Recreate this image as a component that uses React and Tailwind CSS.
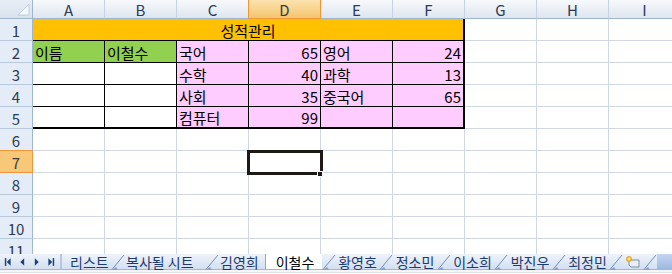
import React from "react";

const COLS = ["A", "B", "C", "D", "E", "F", "G", "H", "I"];
const FONT = { fontFamily: '"Noto Sans CJK KR", "Noto Sans", sans-serif' };

// 표 영역 (A2:F5)
const TABLE = [
  [["이름", "g"], ["이철수", "g"], ["국어", "p"], [65, "p"], ["영어", "p"], [24, "p"]],
  [["", "w"], ["", "w"], ["수학", "p"], [40, "p"], ["과학", "p"], [13, "p"]],
  [["", "w"], ["", "w"], ["사회", "p"], [35, "p"], ["중국어", "p"], [65, "p"]],
  [["", "w"], ["", "w"], ["컴퓨터", "p"], [99, "p"], ["", "p"], ["", "p"]],
];

const FILL = { g: "bg-[#92d050]", p: "bg-[#ffccff]", w: "bg-white" };

const TABS = [
  { name: "리스트", w: "w-[49px]", pl: "pl-[8px]" },
  { name: "복사될 시트", w: "w-[80px]", pl: "pl-[1px]" },
  { name: "김영희", w: "w-[46px]", pl: "pl-[1px]" },
];
const TABS2 = [
  { name: "황영호", w: "w-[43px]" },
  { name: "정소민", w: "w-[44px]" },
  { name: "이소희", w: "w-[43px]" },
  { name: "박진우", w: "w-[44px]" },
  { name: "최정민", w: "w-[43px]" },
];

function Slash() {
  return (
    <svg width="14" height="16" viewBox="0 0 14 16" className="shrink-0">
      <line x1="1" y1="15.5" x2="13" y2="1" stroke="#6f8bb8" strokeWidth="1" />
      <path d="M1 16 L7 16 L5 13 Z" fill="#8aa2c8" />
    </svg>
  );
}

function NavButtons() {
  const c = "#1d3f7c";
  return (
    <div className="flex w-[62px] shrink-0 items-center border-r-2 border-[#b5c8e2]">
      <svg width="62" height="16" viewBox="0 0 62 16">
        <rect x="5" y="4" width="1.5" height="8" fill={c} />
        <path d="M11 4 L7 8 L11 12 Z" fill={c} />
        <path d="M25 4 L21 8 L25 12 Z" fill={c} />
        <path d="M36 4 L40 8 L36 12 Z" fill={c} />
        <path d="M50 4 L54 8 L50 12 Z" fill={c} />
        <rect x="54.5" y="4" width="1.5" height="8" fill={c} />
      </svg>
    </div>
  );
}

function NewSheetIcon() {
  return (
    <svg width="16" height="14" viewBox="0 0 16 14" className="shrink-0">
      <path d="M4 5 H14 V12 H6 L4 10 Z" fill="#e9eef5" stroke="#7f8fa6" strokeWidth="1" />
      <circle cx="4" cy="4" r="2.6" fill="#f7c43a" stroke="#e39a1c" strokeWidth="0.8" />
      <circle cx="4" cy="4" r="1" fill="#fff6c9" />
    </svg>
  );
}

function ColHeader({ c }) {
  const sel = c === "D";
  const beforeSel = c === "C";
  return (
    <div
      className={
        "flex h-[19px] items-center justify-center border-b text-[15px] leading-none " +
        (sel
          ? "border-r border-[#f29536] bg-gradient-to-b from-[#fbe2ae] to-[#f4c66c] text-[#3b3b3b]"
          : "bg-gradient-to-b from-[#f7f9fc] to-[#dfe6ef] text-[#2b3a55] border-b-[#9eb6ce] " +
            (beforeSel ? "border-r border-r-[#f29536]" : "border-r border-r-[#c5d2e2]"))
      }
    >
      {c}
    </div>
  );
}

function RowHeader({ n }) {
  const sel = n === 7;
  const beforeSel = n === 6;
  return (
    <div
      className={
        "flex h-[22px] items-center justify-center border-r border-b pt-px text-[15px] leading-none " +
        (sel
          ? "border-[#f29536] bg-[#f6c877] text-[#3b3b3b]"
          : "bg-[#e4ecf7] text-[#2b3a55] border-r-[#9eb6ce] " +
            (beforeSel ? "border-b-[#f29536]" : "border-b-[#b9c9dc]"))
      }
    >
      {n}
    </div>
  );
}

function Blank({ children, extra = "" }) {
  return <div className={"h-[22px] border-r border-b border-[#d0d7e5] bg-white " + extra}>{children}</div>;
}

export default function App() {
  return (
    <div className="h-[274px] w-[672px] overflow-hidden bg-white" style={FONT}>
      {/* 시트 영역 (11행은 탭 막대에 잘림) */}
      <div className="grid h-[254px] grid-cols-[33px_repeat(9,72px)] content-start overflow-hidden">
        {/* 모서리 */}
        <div className="relative h-[19px] border-r border-b border-[#9eb6ce] bg-gradient-to-b from-[#e8eef6] to-[#d8e2ee]">
          <svg width="32" height="18" viewBox="0 0 32 18" className="absolute inset-0">
            <path d="M29 4 L29 15 L18 15 Z" fill="#f4f7fb" stroke="#b7c6d8" strokeWidth="0.8" />
          </svg>
        </div>
        {COLS.map((c) => (
          <ColHeader key={c} c={c} />
        ))}

        {/* 1행 */}
        <RowHeader n={1} />
        <div className="col-span-6 flex h-[22px] items-center justify-center border-r-2 border-b border-black bg-[#ffc000] pt-px text-[15px] leading-none text-black">
          성적관리
        </div>
        <Blank />
        <Blank />
        <Blank />

        {/* 2~5행 */}
        {TABLE.map((row, ri) => (
          <React.Fragment key={ri}>
            <RowHeader n={ri + 2} />
            {row.map(([v, f], ci) => (
              <div
                key={ci}
                className={
                  "flex h-[22px] items-center border-black pt-px text-[15px] leading-none text-black " +
                  FILL[f] +
                  (typeof v === "number" ? " justify-end pr-[2px]" : " pl-[2px]") +
                  (ci === 5 ? " border-r-2" : " border-r") +
                  (ri === 3 ? " border-b-2" : " border-b")
                }
              >
                {v}
              </div>
            ))}
            <Blank />
            <Blank />
            <Blank />
          </React.Fragment>
        ))}

        {/* 6~11행 */}
        {[6, 7, 8, 9, 10, 11].map((n) => (
          <React.Fragment key={n}>
            <RowHeader n={n} />
            {COLS.map((c) =>
              n === 7 && c === "D" ? (
                <Blank key={c} extra="relative">
                  <div className="absolute top-[-1px] left-[-2px] h-[25px] w-[76px] border-[3px] border-[#1b1a17]" />
                  <div className="absolute top-[20px] left-[68px] h-[6px] w-[6px] border border-white bg-[#1b1a17]" />
                </Blank>
              ) : (
                <Blank key={c} />
              )
            )}
          </React.Fragment>
        ))}
      </div>

      {/* 시트 탭 */}
      <div className="flex h-[16px] items-stretch border-b border-[#9fb7d9] bg-gradient-to-b from-[#eef3fa] to-[#d3e0f1] text-[14px] leading-none text-[#1c3a70]">
        <NavButtons />
        {TABS.map((t) => (
          <React.Fragment key={t.name}>
            <div className={t.w + " " + t.pl + " flex shrink-0 items-center whitespace-nowrap"}>{t.name}</div>
            {t.name !== "김영희" && <Slash />}
          </React.Fragment>
        ))}
        <div className="flex w-[57px] shrink-0 items-center justify-center border-l border-[#8ea7cc] bg-white pl-[2px] text-black">
          이철수
        </div>
        <Slash />
        {TABS2.map((t) => (
          <React.Fragment key={t.name}>
            <div className={t.w + " flex shrink-0 items-center justify-center whitespace-nowrap"}>{t.name}</div>
            <Slash />
          </React.Fragment>
        ))}
        <div className="flex w-[20px] shrink-0 items-center justify-center">
          <NewSheetIcon />
        </div>
        <Slash />
        <div className="flex-1 bg-gradient-to-b from-[#c3d6ef] to-[#9db9e1]" />
      </div>
      <div className="h-[3px] border-b border-[#dfe3e9] bg-[#f3f5f8]" />
    </div>
  );
}
